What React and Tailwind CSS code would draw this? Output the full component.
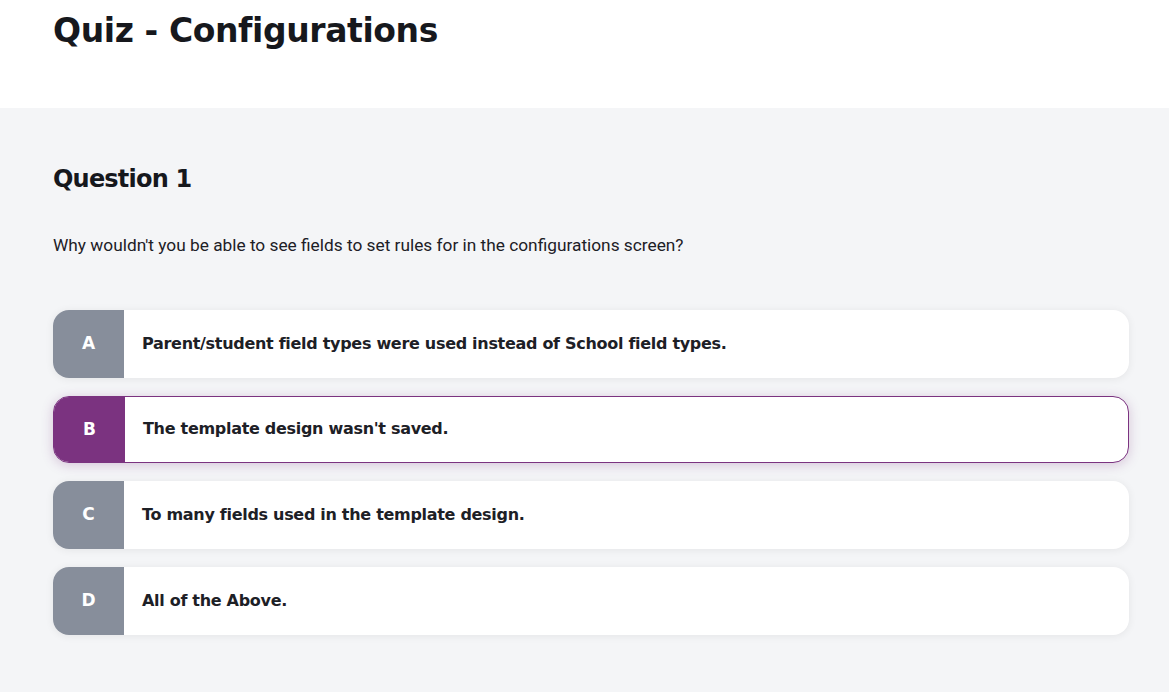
import React from "react";

const options = [
  { letter: "A", text: "Parent/student field types were used instead of School field types." },
  { letter: "B", text: "The template design wasn't saved.", selected: true },
  { letter: "C", text: "To many fields used in the template design." },
  { letter: "D", text: "All of the Above." },
];

const heading = { fontFamily: '"DejaVu Sans", sans-serif' };

const App = () => {
  return (
    <div className="min-h-screen bg-[#f4f5f7]">
      <header className="bg-white h-[108px] px-[53px] pt-[6px]">
        <h1 className="text-[33px] font-bold text-[#16181d] tracking-[-0.4px]" style={heading}>Quiz - Configurations</h1>
      </header>
      <main className="pl-[53px] pr-[40px] pt-[53px] pb-10">
        <h2 className="text-[24px] font-bold text-[#16181d] tracking-[-0.8px]" style={heading}>Question 1</h2>
        <p className="mt-[36px] text-[17.3px] text-[#1d2026]" style={{ fontFamily: "Roboto, sans-serif" }}>
          Why wouldn't you be able to see fields to set rules for in the configurations screen?
        </p>
        <div className="mt-[51px] flex flex-col gap-[18px]">
          {options.map(o => (
            <div
              key={o.letter}
              className={
                o.selected
                  ? "flex h-[67px] rounded-2xl bg-white border border-[#7b3380] overflow-hidden shadow-[0_2px_12px_rgba(123,51,128,0.25)]"
                  : "flex h-[68px] rounded-2xl bg-white overflow-hidden shadow-[0_1px_8px_rgba(0,0,0,0.07)]"
              }
            >
              <div className={(o.selected ? "bg-[#7b3380]" : "bg-[#878e9b]") + " w-[71px] shrink-0 flex items-center justify-center text-white text-[17px] font-bold"} style={heading}>
                {o.letter}
              </div>
              <div className="flex items-center pl-[18px] text-[16px] font-bold text-[#1d2026] tracking-[-0.3px]" style={heading}>
                {o.text}
              </div>
            </div>
          ))}
        </div>
      </main>
    </div>
  );
};

export default App;
